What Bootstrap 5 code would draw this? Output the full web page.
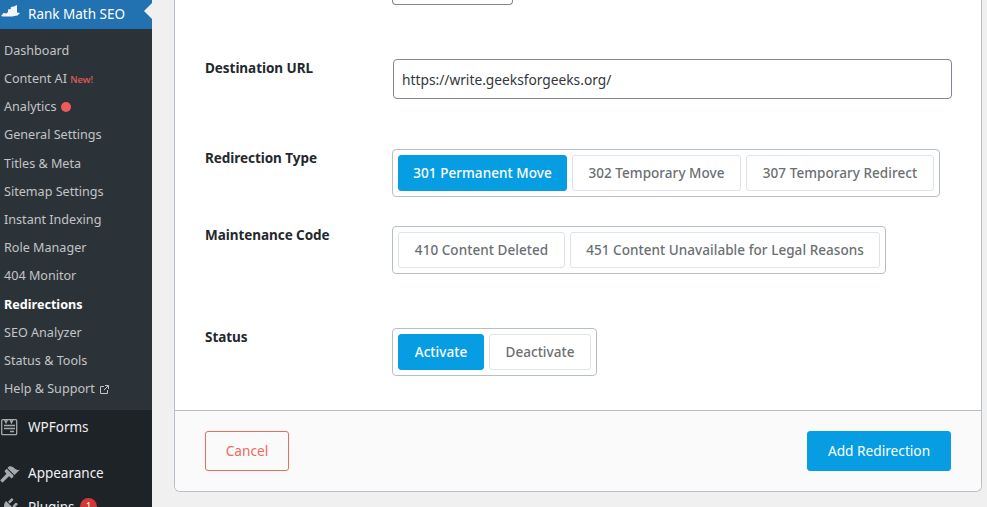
<!DOCTYPE html>
<html lang="en">
<head>
<meta charset="utf-8">
<title>Rank Math SEO Redirections</title>
<link rel="stylesheet" href="https://cdn.jsdelivr.net/npm/bootstrap@5.3.0/dist/css/bootstrap.min.css">
<style>
html,body{height:100%;overflow:hidden}
body{background:#f0f0f1;font-family:"Noto Sans","Open Sans",sans-serif;color:#2c3338;font-size:14px}
.wp-side{width:152px;height:507px;background:#1d2327;overflow:hidden;flex:none}
.wp-head{height:29px;background:#2271b1;color:#fff;font-size:13.5px;padding-left:28px;position:relative}
.wp-head svg,.wp-top svg{position:absolute;left:0}
.wp-head::after{content:"";position:absolute;right:0;top:3px;border:8.5px solid transparent;border-right-color:#f0f0f1;border-left:0}
.wp-sub{background:#2c3338;padding:8px 0 7px;list-style:none;margin:0}
.wp-sub li{height:28.17px;line-height:28.17px;padding-left:4px;font-size:12.6px;color:#c3c4c7;white-space:nowrap}
.wp-sub li.on{color:#fff;font-weight:700;padding-top:1px}
.wp-new{color:#e25c5c;font-size:9.5px;font-weight:500}
.wp-dot{display:inline-block;width:10px;height:10px;border-radius:50%;background:#f05a5a;margin-left:1px;vertical-align:-1px}
.wp-ext{margin-left:2px;vertical-align:-1px}
.wp-top{position:relative;color:#f0f0f1;font-size:13.5px;padding-left:28px;height:34px;line-height:34px}
.wp-count{display:inline-block;width:17px;height:17px;border-radius:50%;background:#d63638;color:#fff;font-size:10px;line-height:17px;text-align:center;vertical-align:2px;margin-left:2px}
.rm-main{padding:0 5px 15px 22px;height:507px}
.rm-panel{background:#fff;border:1px solid #b5bfc9;border-top:0;border-radius:0 0 6px 6px;height:492px;width:808px;overflow:hidden}
.rm-body{height:410px;padding:0 30px;flex:none}
.rm-foot{height:81px;background:#fafafa;border-top:1px solid #b5bfc9;padding:20px 30px}
.rm-stub{width:121px;height:5px;margin-left:187px;border:1px solid #7e8993;border-top:0;border-radius:0 0 4px 4px}
.rm-label{width:187px;flex:none;font-weight:700;font-size:13.5px;letter-spacing:-.05px;color:#23282d;line-height:18px}
.rm-input{width:559px;flex:none;height:40px;margin-left:1px;border:1px solid #7e8993;border-radius:4px;padding:0 8px;font-size:13.75px;color:#32373c;background:#fff;font-family:inherit}
.rm-group{border:1px solid #b5bfc9;border-radius:4px;padding:5px;gap:5px;height:48px}
.rm-opt{border:1px solid #dfe3e8;border-radius:3px;background:#fff;color:#6b6f73;font-weight:500;font-size:13.5px;height:36px;line-height:34px;white-space:nowrap;text-align:center;letter-spacing:.05px;flex:none}
.rm-opt.sel{background:#069de3;border-color:#069de3;color:#fff}
.opt-169{width:169px}.opt-188{width:188px}.opt-167{width:167px}.opt-310{width:310px}.opt-86{width:86px}.opt-102{width:102px}
.rm-cancel,.rm-add{height:40px;border-radius:3px;font-size:13.7px;padding:0;line-height:38px}
.rm-cancel{width:84px;border:1px solid #ee6a63;color:#ee6a63;background:transparent}
.rm-add{width:144px;border:1px solid #069de3;background:#069de3;color:#fff}
.rm-m1{margin-top:54px}.rm-m2{margin-top:50px}.rm-m3{margin-top:29px}.rm-m4{margin-top:54px}
</style>
</head>
<body class="m-0">
<div class="d-flex">
  <nav class="wp-side">
    <div class="wp-head d-flex align-items-center">
      <svg width="21" height="18" viewBox="0 0 21 18" style="top:0"><path fill="#f2f6fa" d="M1 16l2.500-3 3 .5 1.500-1.500V9.500l2.800-.5V7l3-.5L17 5v7.500l3 .5-2.500 2.500-3 .5-2 .5H3z"/></svg>
      Rank Math SEO
    </div>
    <ul class="wp-sub">
      <li>Dashboard</li>
      <li>Content AI <span class="wp-new">New!</span></li>
      <li>Analytics <span class="wp-dot"></span></li>
      <li>General Settings</li>
      <li>Titles &amp; Meta</li>
      <li>Sitemap Settings</li>
      <li>Instant Indexing</li>
      <li>Role Manager</li>
      <li>404 Monitor</li>
      <li class="on">Redirections</li>
      <li>SEO Analyzer</li>
      <li>Status &amp; Tools</li>
      <li>Help &amp; Support <svg class="wp-ext" width="9" height="9" viewBox="0 0 9 9" fill="none" stroke="#c3c4c7"><path d="M4 1.500H.5v7h7V5M5 .5h3.500V4M8.500.5L4 5"/></svg></li>
    </ul>
    <div class="wp-top">
      <svg width="18" height="18" viewBox="0 0 18 18" style="top:8px" fill="none" stroke="#a7aaad" stroke-width="1.300"><rect x="1.700" y="1.700" width="15" height="15" rx="1"/><path d="M4.500 1.500l1.500 3 1.500-3M10 1.500l1.500 3 1.500-3M4 7.500h11M4 10.500h11M10 13.500h4" stroke-width="1.500"/></svg>
      WPForms
    </div>
    <div class="wp-top" style="margin-top:12px">
      <svg width="20" height="20" viewBox="0 0 20 20" style="top:8px"><path fill="#a7aaad" d="M14.480 11.060L7.410 3.990l1.500-1.500c.5-.56 2.300-.47 3.510.32 1.210.8 1.430 1.280 2.910 2.100 1.180.64 2.450 1.260 4.450.85zm-.71.71L6.700 4.700 4.930 6.470c-.39.39-.39 1.020 0 1.410l1.060 1.060c.39.39.39 1.020 0 1.410l-5.300 5.300c-.39.39-.39 1.020 0 1.410l1.060 1.060c.39.39 1.020.39 1.410 0l5.300-5.300c.39-.39 1.020-.39 1.410 0l1.060 1.060c.39.39 1.020.39 1.410 0z"/></svg>
      Appearance
    </div>
    <div class="wp-top">
      <svg width="20" height="20" viewBox="0 0 20 20" style="top:6px"><path fill="#a7aaad" d="M13.110 4.360L9.870 7.600 8 5.730l3.240-3.240c.35-.34 1.050-.2 1.560.32.520.51.660 1.210.31 1.550zm-8 1.770l.91-1.120 9.010 9.010-1.190.84c-.71.71-2.630 1.160-3.820 1.160H6.140L4.900 17.260c-.59.59-1.540.59-2.120 0-.59-.58-.59-1.530 0-2.120l1.240-1.240v-3.880c0-1.130.4-3.190 1.090-3.890zm7.260 3.970l3.240-3.240c.34-.35 1.040-.21 1.550.31.520.51.660 1.210.31 1.550l-3.240 3.250z"/></svg>
      Plugins <span class="wp-count">1</span>
    </div>
  </nav>
  <main class="rm-main flex-grow-1">
    <div class="rm-panel d-flex flex-column">
      <div class="rm-body">
        <div class="rm-stub"></div>
        <div class="d-flex rm-m1">
          <div class="rm-label">Destination URL</div>
          <input class="rm-input" value="https://write.geeksforgeeks.org/" aria-label="Destination URL">
        </div>
        <div class="d-flex rm-m2">
          <div class="rm-label">Redirection Type</div>
          <div class="rm-group d-flex">
            <span class="rm-opt opt-169 sel">301 Permanent Move</span>
            <span class="rm-opt opt-169">302 Temporary Move</span>
            <span class="rm-opt opt-188">307 Temporary Redirect</span>
          </div>
        </div>
        <div class="d-flex rm-m3">
          <div class="rm-label">Maintenance Code</div>
          <div class="rm-group d-flex">
            <span class="rm-opt opt-167">410 Content Deleted</span>
            <span class="rm-opt opt-310">451 Content Unavailable for Legal Reasons</span>
          </div>
        </div>
        <div class="d-flex rm-m4">
          <div class="rm-label">Status</div>
          <div class="rm-group d-flex">
            <span class="rm-opt opt-86 sel">Activate</span>
            <span class="rm-opt opt-102">Deactivate</span>
          </div>
        </div>
      </div>
      <div class="rm-foot d-flex justify-content-between">
        <button type="button" class="btn rm-cancel">Cancel</button>
        <button type="button" class="btn rm-add">Add Redirection</button>
      </div>
    </div>
  </main>
</div>
<script src="https://cdn.jsdelivr.net/npm/bootstrap@5.3.0/dist/js/bootstrap.bundle.min.js"></script>
</body>
</html>
